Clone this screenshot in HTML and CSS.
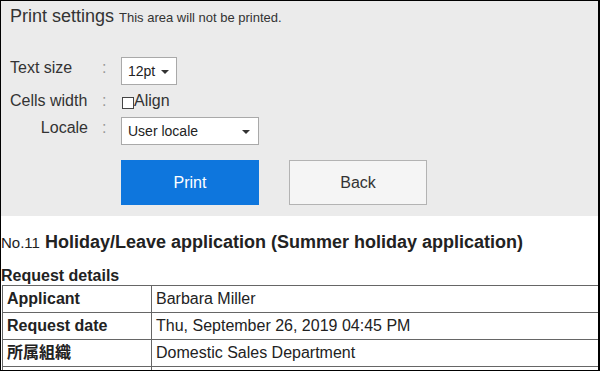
FILE: index.html
```html
<!DOCTYPE html>
<html>
<head>
<meta charset="utf-8">
<link rel="stylesheet" href="styles.css">
</head>
<body>
<div class="frame">
  <div class="settings">
    <div class="settings-title">Print settings <span class="note">This area will not be printed.</span></div>
    <div class="form">
      <div class="row row-select">
        <div class="label">Text size</div>
        <div class="colon">:</div>
        <div class="select select-size"><span>12pt</span><span class="arrow"></span></div>
      </div>
      <div class="row row-check">
        <div class="label">Cells width</div>
        <div class="colon">:</div>
        <label class="check"><span class="box"></span>Align</label>
      </div>
      <div class="row row-select">
        <div class="label label-right">Locale</div>
        <div class="colon">:</div>
        <div class="select select-locale"><span>User locale</span><span class="arrow"></span></div>
      </div>
    </div>
    <div class="buttons">
      <button class="btn btn-primary">Print</button>
      <button class="btn btn-secondary">Back</button>
    </div>
  </div>
  <div class="content">
    <h1 class="doc-title"><span class="doc-no">No.11</span> Holiday/Leave application (Summer holiday application)</h1>
    <h2 class="section-title">Request details</h2>
    <table class="details">
      <tr><th>Applicant</th><td>Barbara Miller</td></tr>
      <tr><th>Request date</th><td>Thu, September 26, 2019 04:45 PM</td></tr>
      <tr><th>所属組織</th><td>Domestic Sales Department</td></tr>
      <tr><th>&nbsp;</th><td>&nbsp;</td></tr>
    </table>
  </div>
</div>
</body>
</html>
```

FILE: styles.css
```css
* { box-sizing: border-box; }
html, body { margin: 0; padding: 0; background: #fff; }
body {
  font-family: "Liberation Sans", Arial, "Noto Sans CJK JP", sans-serif;
  color: #333;
}
.frame {
  width: 600px;
  height: 371px;
  border: 1px solid #000;
  border-right-width: 2px;
  overflow: hidden;
  background: #fff;
}
.settings {
  background: #ebebeb;
  padding: 5px 9px 11px;
}
.settings-title {
  display: flex;
  align-items: baseline;
  gap: 5px;
  height: 21px;
  font-size: 18px;
  line-height: 21px;
  color: #333;
}
.note { font-size: 13px; }
.form { margin-top: 30px; }
.row {
  display: flex;
  align-items: center;
  font-size: 16px;
}
.row-select { height: 28px; }
.row-check { height: 32px; }
.label { width: 78px; color: #333; line-height: 18px; }
.label-right { text-align: right; }
.colon { width: 33px; padding-left: 14px; color: #999; line-height: 18px; }
.row-select .label, .row-select .colon { margin-bottom: 6px; }
.select {
  height: 28px;
  background: #fff;
  border: 1px solid #a9a9a9;
  display: flex;
  align-items: center;
  justify-content: space-between;
  font-size: 14px;
  color: #222;
  padding: 0 7px 0 6px;
}
.select-size { width: 56px; }
.select-locale { width: 138px; padding-right: 8px; }
.arrow {
  width: 0;
  height: 0;
  border-left: 4px solid transparent;
  border-right: 4px solid transparent;
  border-top: 4px solid #333;
  margin-top: 1px;
}
.check {
  display: flex;
  align-items: center;
  color: #333;
  line-height: 18px;
}
.box {
  width: 12px;
  height: 12px;
  border: 1px solid #444;
  background: #fff;
  margin-left: 1px;
  margin-top: 3px;
}
.buttons {
  display: flex;
  gap: 30px;
  margin-top: 15px;
  margin-left: 111px;
}
.btn {
  width: 138px;
  height: 45px;
  font-family: inherit;
  font-size: 16px;
  border: 1px solid transparent;
  padding: 0;
}
.btn-primary { background: #0e76dd; color: #fff; border-color: #0e76dd; }
.btn-secondary { background: #f5f5f5; color: #333; border-color: #b3b3b3; }
.content { padding: 0; }
.doc-title {
  display: flex;
  align-items: baseline;
  gap: 5px;
  height: 22px;
  margin: 15px 0 0;
  font-size: 18px;
  line-height: 22px;
  font-weight: bold;
  color: #222;
}
.doc-no { font-size: 15px; font-weight: normal; }
.section-title {
  height: 18px;
  margin: 14px 0 0;
  font-size: 16px;
  line-height: 18px;
  font-weight: bold;
  color: #222;
}
.details {
  border-collapse: collapse;
  margin-left: 1px;
  width: 720px;
  font-size: 16px;
}
.details th, .details td {
  border: 1px solid #666;
  height: 27px;
  padding: 0 4px;
  line-height: 18px;
  text-align: left;
  vertical-align: middle;
  color: #222;
}
.details th { width: 149px; font-weight: bold; }
.details td { font-weight: normal; }
```
